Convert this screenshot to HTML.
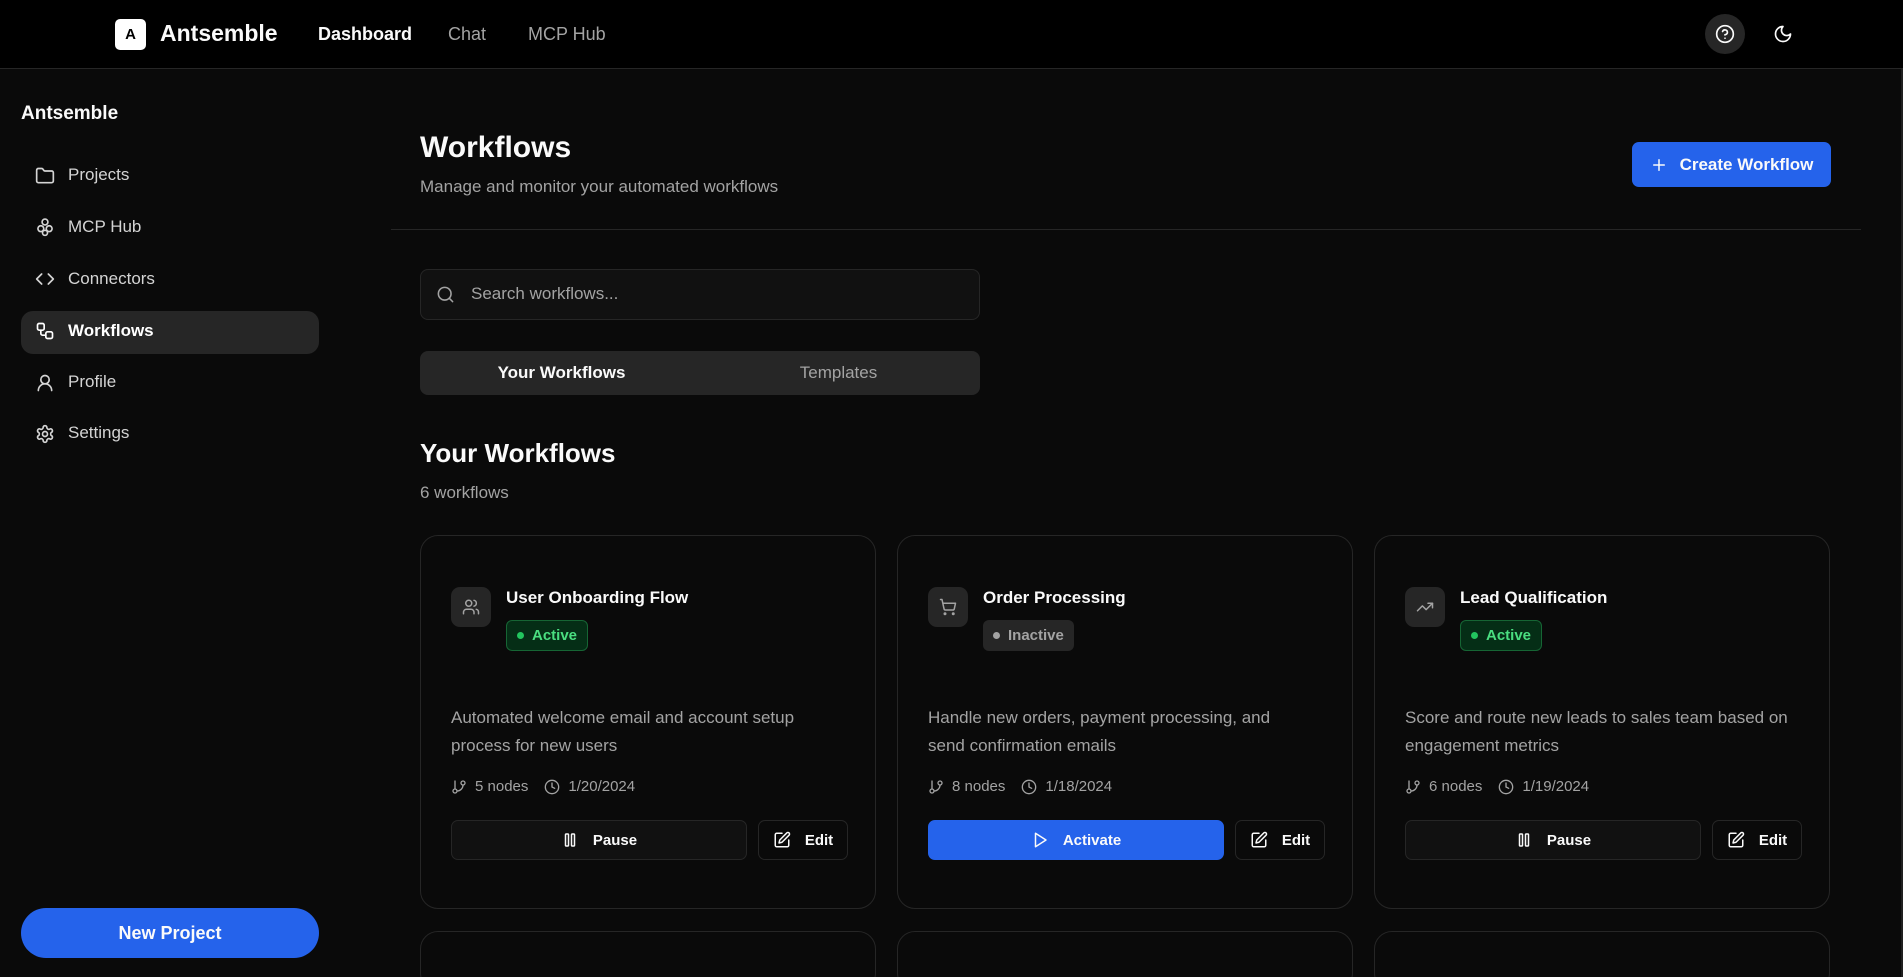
<!DOCTYPE html>
<html><head><meta charset="utf-8"><style>
*{box-sizing:border-box;margin:0;padding:0}
html{width:1903px;height:977px;overflow:hidden}
body{width:1903px;height:977px;overflow:hidden;background:#0a0a0a;font-family:"Liberation Sans",sans-serif;color:#fafafa;position:relative}
.a{position:absolute}
svg{fill:none;stroke:currentColor;stroke-width:2;stroke-linecap:round;stroke-linejoin:round}
.hdr{left:0;top:0;width:1903px;height:69px;background:#000;border-bottom:1px solid #262626}
.nav{font-size:18px;top:24px}
.side{font-size:17px;color:#d4d4d4;left:68px}
.sic{left:35px;width:20px;height:20px;color:#d4d4d4}
.card{width:456px;height:374px;border:1px solid #262626;border-radius:18px;background:#0a0a0a}
.ib{left:30px;top:51px;width:40px;height:40px;border-radius:9px;background:#262626;color:#a3a3a3;display:flex;align-items:center;justify-content:center}
.tt{left:85px;top:52px;font-size:17px;font-weight:bold;color:#fafafa}
.bd{left:85px;top:84px;height:31px;border-radius:6px;font-size:15px;font-weight:bold;display:flex;align-items:center;padding:0 10px 0 10px}
.bd i{width:7px;height:7px;border-radius:50%;display:inline-block;margin-right:8px}
.ds{left:30px;top:168px;width:392px;font-size:17px;line-height:28px;color:#a3a3a3}
.mt{left:30px;top:242px;font-size:15px;color:#a3a3a3;display:flex;align-items:center}
.mt svg{width:16px;height:16px;margin-right:8px}
.b1{left:30px;top:284px;width:296px;height:40px;border:1px solid #262626;border-radius:7px;background:#111;display:flex;align-items:center;justify-content:center;font-size:15px;font-weight:bold}
.b2{left:337px;top:284px;width:90px;height:40px;border:1px solid #262626;border-radius:7px;background:#0a0a0a;display:flex;align-items:center;justify-content:center;font-size:15px;font-weight:bold}
.b1 svg,.b2 svg{width:18px;height:18px;margin-right:14px}
</style></head><body>
<div class="a hdr"></div>
<div class="a" style="left:115px;top:19px;width:31px;height:31px;background:#fff;border-radius:5px;color:#000;font-weight:bold;font-size:15px;display:flex;align-items:center;justify-content:center">A</div>
<div class="a" style="left:160px;top:20px;font-size:23px;font-weight:bold">Antsemble</div>
<div class="a nav" style="left:318px;font-weight:bold">Dashboard</div>
<div class="a nav" style="left:448px;color:#a3a3a3">Chat</div>
<div class="a nav" style="left:528px;color:#a3a3a3">MCP Hub</div>
<div class="a" style="left:1705px;top:14px;width:40px;height:40px;border-radius:50%;background:#262626;display:flex;align-items:center;justify-content:center"><svg width="20" height="20" viewBox="0 0 24 24"><circle cx="12" cy="12" r="10"/><path d="M9.1 9a3 3 0 0 1 5.8 1c0 2-3 3-3 3"/><path d="M12 17h.01"/></svg></div>
<div class="a" style="left:1773px;top:24px"><svg width="20" height="20" viewBox="0 0 24 24"><path d="M12 3a6 6 0 0 0 9 9 9 9 0 1 1-9-9Z"/></svg></div>

<div class="a" style="left:21px;top:103px;font-size:19px;font-weight:bold">Antsemble</div>
<div class="a" style="left:21px;top:311px;width:298px;height:43px;border-radius:12px;background:#262626"></div>
<svg class="a sic" style="top:166px" viewBox="0 0 24 24"><path d="M20 20a2 2 0 0 0 2-2V8a2 2 0 0 0-2-2h-7.9a2 2 0 0 1-1.7-.9l-.8-1.2A2 2 0 0 0 7.9 3H4a2 2 0 0 0-2 2v13a2 2 0 0 0 2 2Z"/></svg>
<div class="a side" style="top:165px">Projects</div>
<svg class="a sic" style="top:217px" viewBox="0 0 24 24"><circle cx="12" cy="6" r="3.5"/><circle cx="7" cy="14" r="3.5"/><circle cx="17" cy="14" r="3.5"/><circle cx="12" cy="19" r="3"/></svg>
<div class="a side" style="top:217px">MCP Hub</div>
<svg class="a sic" style="top:269px" viewBox="0 0 24 24"><path d="m16 18 6-6-6-6M8 6l-6 6 6 6"/></svg>
<div class="a side" style="top:269px">Connectors</div>
<svg class="a sic" style="top:321px;color:#fff" viewBox="0 0 24 24"><rect x="3" y="3" width="8" height="8" rx="2"/><path d="M7 11v4a2 2 0 0 0 2 2h4"/><rect x="13" y="13" width="8" height="8" rx="2"/></svg>
<div class="a side" style="top:321px;color:#fff;font-weight:bold">Workflows</div>
<svg class="a sic" style="top:373px" viewBox="0 0 24 24"><circle cx="12" cy="8" r="5"/><path d="M20 21a8 8 0 0 0-16 0"/></svg>
<div class="a side" style="top:372px">Profile</div>
<svg class="a sic" style="top:424px" viewBox="0 0 24 24"><path d="M12.2 2h-.4a2 2 0 0 0-2 2v.2a2 2 0 0 1-1 1.7l-.4.3a2 2 0 0 1-2 0l-.2-.1a2 2 0 0 0-2.7.7l-.2.4a2 2 0 0 0 .7 2.7l.2.1a2 2 0 0 1 1 1.7v.5a2 2 0 0 1-1 1.8l-.2.1a2 2 0 0 0-.7 2.7l.2.4a2 2 0 0 0 2.7.7l.2-.1a2 2 0 0 1 2 0l.4.3a2 2 0 0 1 1 1.7v.2a2 2 0 0 0 2 2h.4a2 2 0 0 0 2-2v-.2a2 2 0 0 1 1-1.7l.4-.3a2 2 0 0 1 2 0l.2.1a2 2 0 0 0 2.7-.7l.2-.4a2 2 0 0 0-.7-2.7l-.2-.1a2 2 0 0 1-1-1.8v-.5a2 2 0 0 1 1-1.7l.2-.1a2 2 0 0 0 .7-2.7l-.2-.4a2 2 0 0 0-2.7-.7l-.2.1a2 2 0 0 1-2 0l-.4-.3a2 2 0 0 1-1-1.7V4a2 2 0 0 0-2-2z"/><circle cx="12" cy="12" r="3"/></svg>
<div class="a side" style="top:423px">Settings</div>
<div class="a" style="left:21px;top:908px;width:298px;height:50px;border-radius:25px;background:#2563eb;display:flex;align-items:center;justify-content:center;font-size:18px;font-weight:bold">New Project</div>

<div class="a" style="left:420px;top:131px;font-size:30px;font-weight:bold">Workflows</div>
<div class="a" style="left:420px;top:177px;font-size:17px;color:#a3a3a3">Manage and monitor your automated workflows</div>
<div class="a" style="left:1632px;top:142px;width:199px;height:45px;border-radius:7px;background:#2563eb;display:flex;align-items:center;justify-content:center;font-size:17px;font-weight:bold"><svg width="18" height="18" viewBox="0 0 24 24" style="margin-right:12px"><path d="M5 12h14M12 5v14"/></svg>Create Workflow</div>
<div class="a" style="left:391px;top:229px;width:1470px;height:1px;background:#262626"></div>

<div class="a" style="left:420px;top:269px;width:560px;height:51px;border:1px solid #262626;border-radius:8px;background:#111"></div>
<svg class="a" style="left:436px;top:285px;width:19px;height:19px;color:#a3a3a3" viewBox="0 0 24 24"><circle cx="11" cy="11" r="8"/><path d="m21 21-4.3-4.3"/></svg>
<div class="a" style="left:471px;top:284px;font-size:17px;color:#a3a3a3">Search workflows...</div>

<div class="a" style="left:420px;top:351px;width:560px;height:44px;border-radius:8px;background:#262626"></div>
<div class="a" style="left:420px;top:363px;width:283px;text-align:center;font-size:17px;font-weight:bold">Your Workflows</div>
<div class="a" style="left:697px;top:363px;width:283px;text-align:center;font-size:17px;color:#a3a3a3">Templates</div>

<div class="a" style="left:420px;top:438px;font-size:26px;font-weight:bold">Your Workflows</div>
<div class="a" style="left:420px;top:483px;font-size:17px;color:#a3a3a3">6 workflows</div>

<div class="a card" style="left:420px;top:535px">
<div class="a ib"><svg width="18" height="18" viewBox="0 0 24 24"><path d="M16 21v-2a4 4 0 0 0-4-4H6a4 4 0 0 0-4 4v2"/><circle cx="9" cy="7" r="4"/><path d="M22 21v-2a4 4 0 0 0-3-3.9M16 3.1a4 4 0 0 1 0 7.8"/></svg></div>
<div class="a tt">User Onboarding Flow</div>
<div class="a bd" style="background:#052e16;border:1px solid #166534;color:#4ade80"><i style="background:#22c55e"></i>Active</div>
<div class="a ds">Automated welcome email and account setup process for new users</div>
<div class="a mt"><svg viewBox="0 0 24 24"><path d="M6 3v12"/><circle cx="18" cy="6" r="3"/><circle cx="6" cy="18" r="3"/><path d="M18 9a9 9 0 0 1-9 9"/></svg>5 nodes<svg viewBox="0 0 24 24" style="margin-left:16px"><circle cx="12" cy="12" r="10"/><path d="M12 6v6l4 2"/></svg>1/20/2024</div>
<div class="a b1"><svg viewBox="0 0 24 24"><rect x="6" y="4" width="4" height="16" rx="1"/><rect x="14" y="4" width="4" height="16" rx="1"/></svg>Pause</div>
<div class="a b2"><svg viewBox="0 0 24 24"><path d="M12 3H5a2 2 0 0 0-2 2v14a2 2 0 0 0 2 2h14a2 2 0 0 0 2-2v-7"/><path d="M18.4 2.6a2.1 2.1 0 1 1 3 3L12 15l-4 1 1-4Z"/></svg>Edit</div>
</div>
<div class="a card" style="left:897px;top:535px">
<div class="a ib"><svg width="18" height="18" viewBox="0 0 24 24"><circle cx="8" cy="21" r="1"/><circle cx="19" cy="21" r="1"/><path d="M2 2h2l2.7 12.4a2 2 0 0 0 2 1.6h9.7a2 2 0 0 0 2-1.6L22 7H5.1"/></svg></div>
<div class="a tt">Order Processing</div>
<div class="a bd" style="background:#262626;color:#a3a3a3"><i style="background:#a3a3a3"></i>Inactive</div>
<div class="a ds" style="width:375px">Handle new orders, payment processing, and send confirmation emails</div>
<div class="a mt"><svg viewBox="0 0 24 24"><path d="M6 3v12"/><circle cx="18" cy="6" r="3"/><circle cx="6" cy="18" r="3"/><path d="M18 9a9 9 0 0 1-9 9"/></svg>8 nodes<svg viewBox="0 0 24 24" style="margin-left:16px"><circle cx="12" cy="12" r="10"/><path d="M12 6v6l4 2"/></svg>1/18/2024</div>
<div class="a b1" style="background:#2563eb;border-color:#2563eb"><svg viewBox="0 0 24 24"><path d="M6 3l14 9-14 9V3z"/></svg>Activate</div>
<div class="a b2"><svg viewBox="0 0 24 24"><path d="M12 3H5a2 2 0 0 0-2 2v14a2 2 0 0 0 2 2h14a2 2 0 0 0 2-2v-7"/><path d="M18.4 2.6a2.1 2.1 0 1 1 3 3L12 15l-4 1 1-4Z"/></svg>Edit</div>
</div>
<div class="a card" style="left:1374px;top:535px">
<div class="a ib"><svg width="18" height="18" viewBox="0 0 24 24"><path d="M22 7 13.5 15.5 8.5 10.5 2 17"/><path d="M16 7h6v6"/></svg></div>
<div class="a tt">Lead Qualification</div>
<div class="a bd" style="background:#052e16;border:1px solid #166534;color:#4ade80"><i style="background:#22c55e"></i>Active</div>
<div class="a ds">Score and route new leads to sales team based on engagement metrics</div>
<div class="a mt"><svg viewBox="0 0 24 24"><path d="M6 3v12"/><circle cx="18" cy="6" r="3"/><circle cx="6" cy="18" r="3"/><path d="M18 9a9 9 0 0 1-9 9"/></svg>6 nodes<svg viewBox="0 0 24 24" style="margin-left:16px"><circle cx="12" cy="12" r="10"/><path d="M12 6v6l4 2"/></svg>1/19/2024</div>
<div class="a b1"><svg viewBox="0 0 24 24"><rect x="6" y="4" width="4" height="16" rx="1"/><rect x="14" y="4" width="4" height="16" rx="1"/></svg>Pause</div>
<div class="a b2"><svg viewBox="0 0 24 24"><path d="M12 3H5a2 2 0 0 0-2 2v14a2 2 0 0 0 2 2h14a2 2 0 0 0 2-2v-7"/><path d="M18.4 2.6a2.1 2.1 0 1 1 3 3L12 15l-4 1 1-4Z"/></svg>Edit</div>
</div>
<div class="a" style="left:0;top:931px;width:1903px;height:46px;overflow:hidden">
<div class="a" style="left:420px;top:0;width:456px;height:60px;border:1px solid #262626;border-radius:18px"></div>
<div class="a" style="left:897px;top:0;width:456px;height:60px;border:1px solid #262626;border-radius:18px"></div>
<div class="a" style="left:1374px;top:0;width:456px;height:60px;border:1px solid #262626;border-radius:18px"></div>
</div>
<div class="a" style="left:1901px;top:69px;width:2px;height:908px;background:#1f1f1f"></div>
</body></html>
